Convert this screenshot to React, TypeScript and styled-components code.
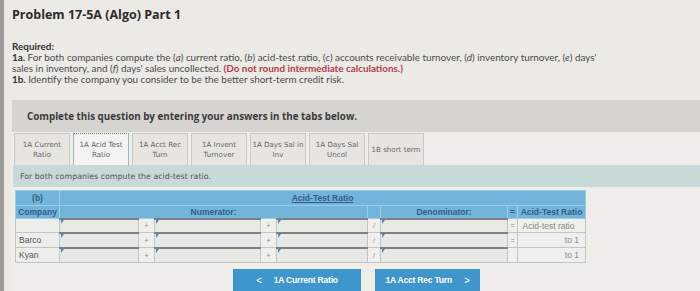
import styled, { createGlobalStyle } from "styled-components";

const GlobalStyle = createGlobalStyle`
  html, body {
    margin: 0;
    padding: 0;
    background: #ebeae5;
  }
  body {
    border-left: 4px solid #9c9b97;
    font-family: "Lato", "Open Sans", sans-serif;
    overflow: hidden;
  }
`;

const tabs = [
  ["1A Current", "Ratio"],
  ["1A Acid Test", "Ratio"],
  ["1A Acct Rec", "Turn"],
  ["1A Invent", "Turnover"],
  ["1A Days Sal in", "Inv"],
  ["1A Days Sal", "Uncol"],
  ["1B short term", ""],
];

const rows = [
  { name: "", eq: true, result: "Acid-test ratio", centered: true },
  { name: "Barco", eq: true, result: "to 1", centered: false },
  { name: "Kyan", eq: false, result: "to 1", centered: false },
];

export default function App() {
  return (
    <Page>
      <GlobalStyle />
      <Title>Problem 17-5A (Algo) Part 1</Title>
      <Required>
        <strong>Required:</strong>
        <br />
        <strong>1a.</strong> For both companies compute the (<em>a</em>) current ratio, (<em>b</em>) acid-test ratio, (<em>c</em>) accounts receivable turnover, (<em>d</em>) inventory turnover, (<em>e</em>) days'
        <br />
        sales in inventory, and (<em>f</em>) days' sales uncollected. <Warn>(Do not round intermediate calculations.)</Warn>
        <br />
        <strong>1b.</strong> Identify the company you consider to be the better short-term credit risk.
      </Required>

      <Prompt>Complete this question by entering your answers in the tabs below.</Prompt>

      <Panel>
        <TabRow>
          {tabs.map(([a, b], i) => (
            <Tab key={a} $active={i === 1}>
              <span>{a}</span>
              {b && <span>{b}</span>}
            </Tab>
          ))}
        </TabRow>
        <Instruction>For both companies compute the acid-test ratio.</Instruction>

        <Grid>
          <colgroup>
            <col style={{ width: 44 }} />
            <col style={{ width: 79 }} />
            <col style={{ width: 16 }} />
            <col style={{ width: 106 }} />
            <col style={{ width: 16 }} />
            <col style={{ width: 91 }} />
            <col style={{ width: 13 }} />
            <col style={{ width: 127 }} />
            <col style={{ width: 10 }} />
            <col style={{ width: 68 }} />
          </colgroup>
          <thead>
            <tr>
              <Head $h={15}>(b)</Head>
              <Head colSpan={9}>
                <u>Acid-Test Ratio</u>
              </Head>
            </tr>
            <tr>
              <Head $h={13}>Company</Head>
              <Head colSpan={5}>Numerator:</Head>
              <Head />
              <Head>Denominator:</Head>
              <Head>=</Head>
              <Head>Acid-Test Ratio</Head>
            </tr>
          </thead>
          <tbody>
            {rows.map((r, i) => (
              <tr key={i}>
                <Name $h={i === 0 ? 14 : 15}>{r.name}</Name>
                <Field />
                <Op>+</Op>
                <Field />
                <Op>+</Op>
                <Field />
                <Op>/</Op>
                <Field />
                <Op>{r.eq ? "=" : ""}</Op>
                <Result $centered={r.centered}>{r.result}</Result>
              </tr>
            ))}
          </tbody>
        </Grid>

        <Nav>
          <NavButton $w={128}>
            <Chevron>&lt;</Chevron>1A Current Ratio
          </NavButton>
          <NavButton $w={105}>
            1A Acct Rec Turn<Chevron $right>&gt;</Chevron>
          </NavButton>
        </Nav>
      </Panel>
    </Page>
  );
}

const Page = styled.div`
  padding: 7px 0 0 8px;
  height: 291px;
  box-sizing: border-box;
`;

const Title = styled.div`
  font-family: "Open Sans", sans-serif;
  font-weight: 700;
  font-size: 12.5px;
  line-height: 16px;
  color: #2b2b2b;
`;

const Required = styled.div`
  margin-top: 18px;
  font-size: 9.9px;
  line-height: 11px;
  color: #4a4a4a;

  strong {
    color: #333;
  }
`;

const Warn = styled.span`
  font-weight: 700;
  color: #b53b50;
`;

const Prompt = styled.div`
  margin-top: 15px;
  height: 32px;
  display: flex;
  align-items: center;
  padding-left: 15px;
  background: #d5d4cf;
  font-family: "Open Sans", sans-serif;
  font-weight: 700;
  font-size: 9.8px;
  color: #3a3a3a;
`;

const Panel = styled.div`
  background: #efeeea;
  padding-left: 1px;
`;

const TabRow = styled.div`
  display: flex;
  gap: 3px;
  padding: 1px 0 0 1px;
`;

const Tab = styled.div<{ $active?: boolean }>`
  width: 56px;
  height: 32px;
  box-sizing: border-box;
  display: flex;
  flex-direction: column;
  align-items: center;
  justify-content: center;
  font-family: "DejaVu Sans", sans-serif;
  font-size: 7.1px;
  line-height: 10px;
  white-space: nowrap;
  color: #666;
  background: ${(p) => (p.$active ? "#f3f3f1" : "#e6e5e0")};
  border: 1px solid #c9c9c5;
  border-bottom: none;
  ${(p) =>
    p.$active &&
    `border-top: 1px dotted #777; border-left-color: #9fb5c0; border-right-color: #9fb5c0;`}
`;

const Instruction = styled.div`
  height: 22px;
  display: flex;
  align-items: center;
  padding-left: 7px;
  background: #c8d9da;
  font-family: "DejaVu Sans", sans-serif;
  font-size: 7.9px;
  color: #555;
`;

const Grid = styled.table`
  margin: 3px 0 0 2px;
  border-collapse: collapse;
  table-layout: fixed;
  width: 570px;
  font-family: "Liberation Sans", Arial, sans-serif;
  font-size: 8.5px;
`;

const Head = styled.th<{ $h?: number }>`
  height: ${(p) => (p.$h ? `${p.$h - 1}px` : "auto")};
  padding: 0;
  background: #72b4da;
  color: #2f5f86;
  font-weight: 700;
  text-align: center;
  border: 1px solid #9ccbe6;
`;

const Name = styled.td<{ $h: number }>`
  height: ${(p) => p.$h - 1}px;
  padding: 0 0 0 3px;
  background: #ededeb;
  color: #555;
  border: 1px solid #c4c4c0;
`;

const Field = styled.td`
  position: relative;
  padding: 0;
  background: #e8e8e6;
  border: 1px solid #c4c4c0;
  border-top: 2px solid #808080;
  border-left: 1px solid #9a9a9a;

  &::before {
    content: "";
    position: absolute;
    left: 1px;
    top: 0;
    border-top: 4px solid #4b87c4;
    border-right: 3px solid transparent;
  }
`;

const Op = styled.td`
  padding: 0;
  text-align: center;
  background: #efefed;
  color: #888;
  font-size: 7px;
  border: 1px solid #c4c4c0;
`;

const Result = styled.td<{ $centered: boolean }>`
  padding: 0 6px 0 0;
  background: #efefed;
  color: #888;
  text-align: ${(p) => (p.$centered ? "center" : "right")};
  border: 1px solid #c4c4c0;
`;

const Nav = styled.div`
  display: flex;
  justify-content: center;
  gap: 14px;
  margin-top: 6px;
`;

const NavButton = styled.div<{ $w: number }>`
  width: ${(p) => p.$w}px;
  height: 22px;
  display: flex;
  align-items: center;
  justify-content: center;
  gap: 10px;
  background: #3f96cc;
  color: #fff;
  font-family: "Liberation Sans", Arial, sans-serif;
  font-weight: 700;
  font-size: 8.5px;
  letter-spacing: -0.2px;
`;

const Chevron = styled.span<{ $right?: boolean }>`
  font-weight: 400;
  font-size: 10px;
  ${(p) => (p.$right ? "margin-left: 2px;" : "margin-right: 2px;")}
`;
